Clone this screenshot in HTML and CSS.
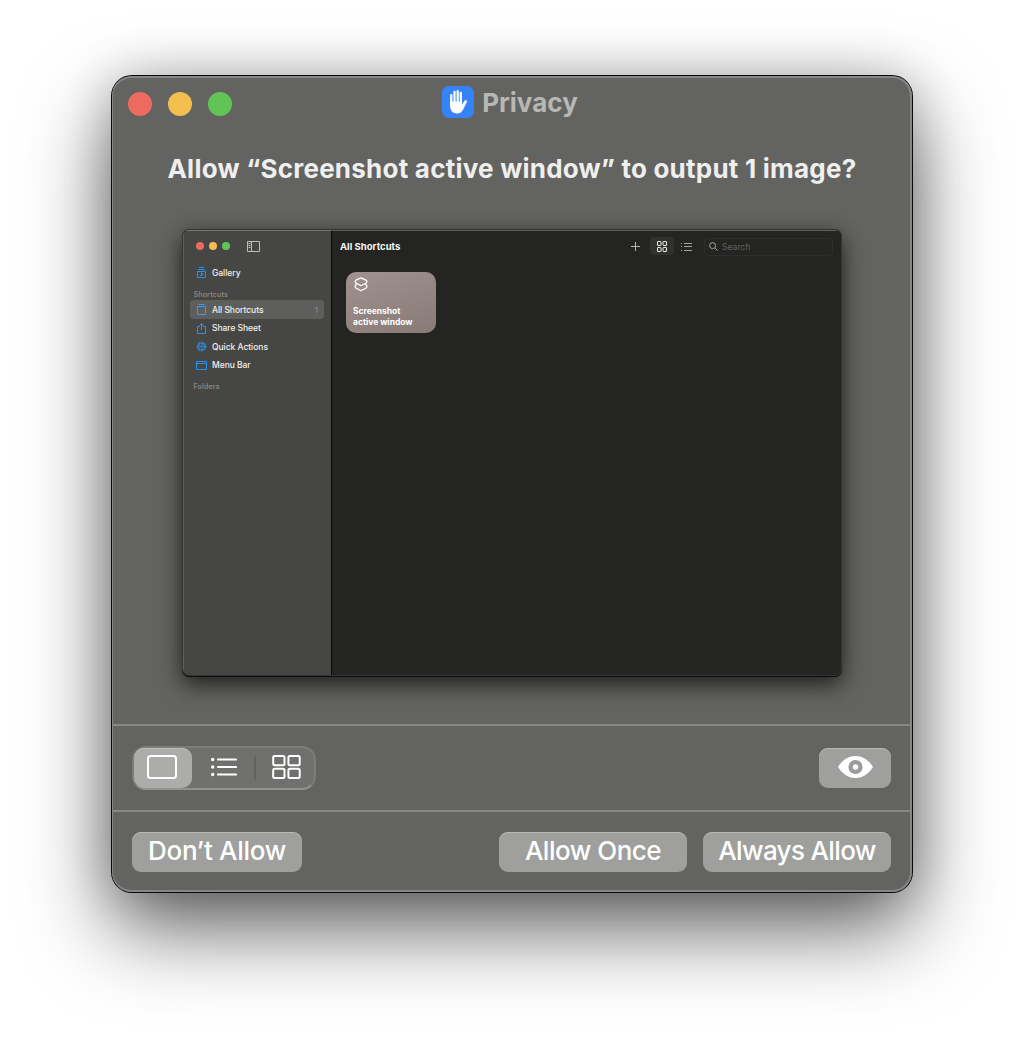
FILE: index.html
```html
<!DOCTYPE html>
<html lang="en">
<head>
<meta charset="utf-8">
<title>Privacy</title>
<link rel="stylesheet" href="styles.css">
</head>
<body>
<main class="window">
  <header class="titlebar">
    <div class="lights"><i class="light red"></i><i class="light yellow"></i><i class="light green"></i></div>
    <div class="title">
      <svg class="title-icon" viewBox="0 0 32 32"><rect width="32" height="32" rx="7" fill="#3584f7"/><g fill="none" stroke="#fff" stroke-linecap="round"><path d="M9.300 9.200V18M12.500 6V17M15.700 5.100V17M18.800 6.900V18" stroke-width="2.300"/><path d="M23.600 15.500 20.500 21" stroke-width="2.600"/></g><path d="M8.150 15.500 20 16v3l2-3.200 2.500.200-3.200 7.200c-1.300 2.800-3.400 4.300-6.300 4.300-4.300 0-6.850-3-6.850-7.500z" fill="#fff"/><path d="M10.900 10v5M14.100 8v6.500M17.300 9v6" stroke="#79aef9" stroke-width=".6"/></svg>
      <span class="title-text">Privacy</span>
    </div>
  </header>
  <section class="content">
    <h1 class="question">Allow “Screenshot active window” to output 1 image?</h1>
    <div class="preview">
      <aside class="sidebar">
        <div class="mini-bar">
          <div class="mini-lights"><i class="light red"></i><i class="light yellow"></i><i class="light green"></i></div>
          <svg class="panel-icon" width="13" height="11" viewBox="0 0 13 11" fill="none" stroke="#bdbdbb"><path d="M.5.5h12v10H.5zM4.500.5v10M1.500 2.500h2M1.500 4.500h2M1.500 6.500h2"/></svg>
        </div>
        <div class="item gallery"><svg class="item-icon" viewBox="0 0 11 11"><path d="M3 .5h5M2 2.500h7M1.500 4.500h8v6h-8zM5.500 5.500v3M4 8.500h1.500M5.500 6l1.500 1v1.500"/></svg>Gallery</div>
        <div class="section">Shortcuts</div>
        <div class="item selected"><svg class="item-icon" viewBox="0 0 11 11"><path d="M1.500 2.500h8v8h-8zM2.500.5h6"/></svg>All Shortcuts<span class="count">1</span></div>
        <div class="item short"><svg class="item-icon" viewBox="0 0 11 11"><path d="M4 3.500H1.500v7h8v-7H7M5.500 7V.5M3.500 2.500l2-2 2 2"/></svg>Share Sheet</div>
        <div class="item"><svg class="item-icon" viewBox="0 0 11 11"><circle cx="5.500" cy="5.500" r="4.200" stroke-dasharray="1.800 .84" stroke-width="1.200"/><circle cx="5.500" cy="5.500" r="3"/><path d="M2.500 5.500h6M4.500 5.500 7 3.300M4.500 5.500l2.500 2.200" stroke-width=".7"/></svg>Quick Actions</div>
        <div class="item short"><svg class="item-icon" viewBox="0 0 11 11"><path d="M.5 1.500h10v8H.5zM.5 3.500h10"/></svg>Menu Bar</div>
        <div class="section folders">Folders</div>
      </aside>
      <div class="pane">
        <div class="pane-bar">
          <span class="pane-title">All Shortcuts</span>
          <svg class="plus" width="9" height="9" viewBox="0 0 9 9"><path d="M4.500 0v9M0 4.500h9" stroke="#b4b4b2"/></svg>
          <span class="grid-button"><svg width="10" height="11" viewBox="0 0 10 11" fill="none" stroke="#eee"><rect x=".5" y=".5" width="3.500" height="4" rx=".5"/><rect x="6" y=".5" width="3.500" height="4" rx=".5"/><rect x=".5" y="6.500" width="3.500" height="4" rx=".5"/><rect x="6" y="6.500" width="3.500" height="4" rx=".5"/></svg></span>
          <svg class="mini-list" width="11" height="9" viewBox="0 0 11 9"><path d="M0 1.500h1M3 1.500h8M0 4.500h1M3 4.500h8M0 8.500h1M3 8.500h8" stroke="#a4a4a2"/></svg>
          <div class="search"><svg width="9" height="9" viewBox="0 0 9 9" fill="none" stroke="#a4a4a2"><circle cx="3.600" cy="3.600" r="3"/><path d="m5.800 5.800 2.800 2.800"/></svg><span>Search</span></div>
        </div>
        <div class="card">
          <svg class="card-icon" width="14" height="15" viewBox="0 0 14 15" fill="none" stroke="#fff" stroke-width="1.300" stroke-linejoin="round"><path d="M7 .8 12 3.200Q14 4.700 12 6L7 8.700 2 6Q0 4.700 2 3.200zM2.700 7Q-.1 9.200 2 11L7 13.800 12 11Q14.100 9.200 11.300 7"/></svg>
          <div class="card-name">Screenshot<br>active window</div>
        </div>
      </div>
    </div>
  </section>
  <div class="toolbar">
    <div class="segments">
      <span class="segment active"><svg width="30" height="24" viewBox="0 0 30 24"><rect x="1" y="1" width="28" height="22" rx="2.500" fill="none" stroke="#fff" stroke-width="2"/></svg></span>
      <span class="segment list"><svg width="26" height="20" viewBox="0 0 26 20" stroke="#fff" stroke-width="2.200" stroke-linecap="round"><path d="M7 2.500h18M7 10h18M7 17.500h18"/><path d="M1.700 2.500h.01M1.700 10h.01M1.700 17.500h.01" stroke-width="3.400"/></svg></span>
      <i class="separator"></i>
      <span class="segment grid"><svg width="29" height="24" viewBox="0 0 29 24" fill="none" stroke="#fff" stroke-width="2"><rect x="1.200" y="1" width="11.300" height="9.300" rx="1.500"/><rect x="16.400" y="1" width="11.300" height="9.300" rx="1.500"/><rect x="1.200" y="13.700" width="11.300" height="9.300" rx="1.500"/><rect x="16.400" y="13.700" width="11.300" height="9.300" rx="1.500"/></svg></span>
    </div>
    <button class="button eye" aria-label="Preview"><svg width="35" height="22" viewBox="0 0 35 22"><path d="M0 11C4 4.500 10 0 17.500 0S31 4.500 35 11c-4 6.500-10 11-17.500 11S4 17.500 0 11z" fill="#fff"/><circle cx="17.500" cy="11" r="4.900" fill="#fff" stroke="#9b9b99" stroke-width="4.400"/></svg></button>
  </div>
  <footer class="actions">
    <button class="button deny">Don’t Allow</button>
    <button class="button once">Allow Once</button>
    <button class="button always">Always Allow</button>
  </footer>
</main>
</body>
</html>
```
FILE: styles.css
```css
* { box-sizing: border-box; }
body { margin: 0; height: 1040px; background: #fff; overflow: hidden; font-family: Inter, "Liberation Sans", sans-serif; }
svg { display: block; flex: none; }
.window {
  position: relative; width: 800px; height: 816px; margin: 76px 0 0 112px;
  display: grid; grid-template-rows: 56px 592px 86px 82px;
  background: #636361; border-radius: 20px;
  box-shadow: 0 0 0 1px #0a0a0a, 0 36px 84px 0 rgba(0,0,0,.62), 0 0 50px rgba(0,0,0,.2);
}
.window::after { content: ""; position: absolute; inset: 0; border: 2px solid #868684; border-left-width: 1px; border-radius: 20px; pointer-events: none; }
.titlebar { display: grid; grid-template-columns: 104px 1fr 104px; padding: 0 18px 0 16px; }
.lights { display: flex; gap: 16px; padding-top: 16px; }
.light { width: 24px; height: 24px; border-radius: 50%; }
.red { background: #ed6a5f; }
.yellow { background: #f5bf50; }
.green { background: #61c555; }
.title { display: flex; justify-content: center; gap: 8px; padding-top: 10px; margin-right: 2px; }
.title-icon { width: 32px; height: 32px; }
.title-text { color: #b7b7b5; font-size: 26px; font-weight: 700; line-height: 34px; letter-spacing: 0; }
.content { display: flex; flex-direction: column; align-items: center; padding-top: 18px; }
.question { margin: 0; height: 80px; line-height: 37px; font-size: 26px; font-weight: 700; letter-spacing: .23px; color: #efefed; white-space: nowrap; }
.preview {
  display: grid; grid-template-columns: 149px 1fr; width: 658px; height: 445px;
  border-radius: 6px; overflow: hidden; background: #242422;
  box-shadow: 0 0 0 1px #343432, 0 1px 0 1px #0c0c0c, 0 10px 22px rgba(0,0,0,.58), 0 2px 22px rgba(0,0,0,.25);
}
.sidebar { background: #464644; border-right: 1px solid #080808; border-left: 1px solid #5f5f5d; border-top: 1px solid #777775; }
.mini-bar { display: flex; align-items: center; height: 31px; padding: 0 0 1px 12px; }
.mini-lights { display: flex; gap: 5px; margin-right: 17px; }
.mini-lights .light { width: 8px; height: 8px; }
.item { display: flex; align-items: center; height: 19px; margin: 0 7px 0 6px; padding: 0 6px; color: #f2f2f0; font-size: 8.500px; font-weight: 500; letter-spacing: -.04px; border-radius: 3.500px; }
.short { height: 18px; }
.gallery { margin-top: 1px; }
.item-icon { width: 11px; height: 11px; margin-right: 5px; fill: none; stroke: #2492f3; stroke-width: 1; }
.selected { background: #5e5e5c; }
.selected .item-icon { stroke: #319cf8; }
.count { margin-left: auto; color: #92928f; font-weight: 400; font-size: 8px; }
.section { height: 9px; line-height: 9px; margin: 8px 0 1px 9.500px; color: #868684; font-size: 7px; font-weight: 600; letter-spacing: .16px; }
.pane { min-width: 0; border-top: 1px solid #5f5f5d; }
.pane-bar { display: flex; align-items: center; height: 31px; padding: 0 8px 1px 8px; }
.pane-title { flex: 1; color: #f4f4f2; font-size: 9.500px; font-weight: 700; letter-spacing: .02px; }
.plus { margin-right: 10px; }
.grid-button { display: flex; justify-content: center; align-items: center; width: 24px; height: 18px; border-radius: 4px; background: #30302e; }
.mini-list { margin: 0 12px 0 7px; }
.search { display: flex; align-items: center; gap: 4px; width: 129px; height: 18px; padding-left: 4px; margin-top: 1px; border: 1px solid #2e2e2c; border-radius: 4px; color: #62625f; font-size: 8.600px; }
.card { width: 90px; height: 61px; margin: 10px 0 0 14px; padding: 5px 0 0 7px; border-radius: 10px; background: linear-gradient(160deg, #a0938f, #887a77); }
.card-icon { margin-left: 1px; }
.card-name { margin-top: 14px; color: #fff; font-size: 8.500px; line-height: 10.500px; font-weight: 700; letter-spacing: -.03px; white-space: nowrap; }
.toolbar, .actions { border-top: 2px solid #868684; }
.toolbar { display: flex; justify-content: space-between; padding: 20px 21px 0 20px; }
.segments { display: flex; align-items: center; width: 184px; height: 44px; border: 2px solid #7c7c7a; border-bottom-color: #929290; border-radius: 14px; background: #70706e; }
.segment { display: flex; justify-content: center; align-items: center; width: 58px; height: 40px; padding-bottom: 2px; }
.active { padding-right: 2px; border-radius: 10px; background: #acacaa; box-shadow: inset 0 1px #bdbdbb; }
.list { width: 62px; padding-left: 1px; }
.separator { width: 2px; height: 24px; background: #626260; }
.grid { padding: 0 0 2px 2px; }
.button { display: flex; justify-content: center; align-items: center; height: 40px; padding: 0 0 3px; border: 0; border-radius: 9px; background: #9f9f9d; box-shadow: inset 0 1px #b8b8b6; color: #fff; font: 500 26px Inter, "Liberation Sans", sans-serif; letter-spacing: -.5px; }
.eye { width: 72px; margin-top: 2px; }
.actions { display: flex; padding: 20px 21px 0 20px; }
.deny { width: 170px; margin-right: auto; letter-spacing: -.3px; }
.once { width: 188px; margin-right: 16px; }
.always { width: 188px; letter-spacing: -.65px; }
```
